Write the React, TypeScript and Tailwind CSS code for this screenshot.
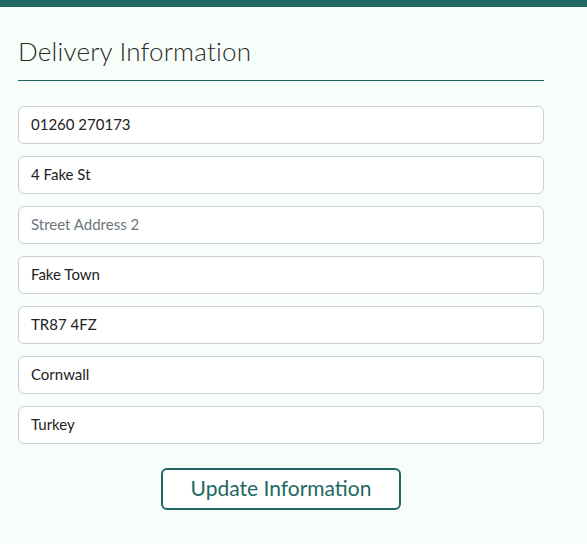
import React from "react";

const fields = [
  { value: "01260 270173", placeholder: "Phone" },
  { value: "4 Fake St", placeholder: "Street Address 1" },
  { value: "", placeholder: "Street Address 2" },
  { value: "Fake Town", placeholder: "Town or City" },
  { value: "TR87 4FZ", placeholder: "Postcode" },
  { value: "Cornwall", placeholder: "County" },
  { value: "Turkey", placeholder: "Country" },
];

export default function App() {
  return (
    <div className="min-h-[544px] w-[587px] bg-[#f7fdf9] font-['Lato','Open_Sans',sans-serif]">
      <div className="h-[7px] bg-[#216862]" />
      <div className="ml-[18px] w-[526px] flex flex-col">
        <h2 className="mt-[20px] h-[53px] text-[26px] leading-[48px] font-light tracking-[0.2px] text-[#2a2a2a] font-['Lato',sans-serif]">
          Delivery Information
        </h2>
        <div className="h-px bg-[#216862]" />
        <div className="mt-[25px] flex flex-col gap-[12px]">
          {fields.map((f, i) => (
            <input
              key={i}
              defaultValue={f.value}
              placeholder={f.placeholder}
              className="h-[38px] w-full rounded-[6px] border border-[#c9ced6] bg-white px-[12px] pb-[2px] text-[15px] text-[#222] placeholder:text-[#6c757d] outline-none"
            />
          ))}
        </div>
        <div className="mt-[24px] flex justify-center">
          <button className="h-[42px] w-[240px] rounded-[6px] border-2 border-[#216862] bg-white pb-[2px] text-[21px] text-[#216862]">
            Update Information
          </button>
        </div>
      </div>
    </div>
  );
}
